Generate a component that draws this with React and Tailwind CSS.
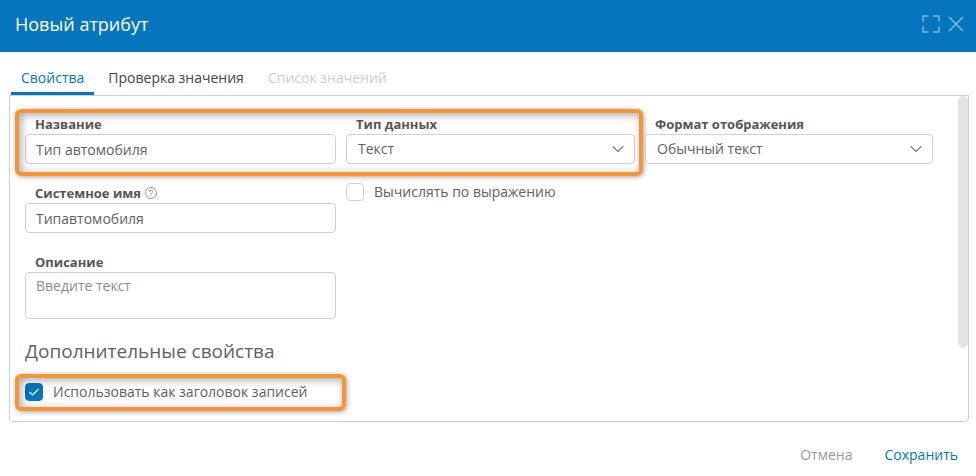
import React, { useState } from "react";

const tabs = [
  { id: "props", title: "Свойства" },
  { id: "check", title: "Проверка значения" },
  { id: "values", title: "Список значений", disabled: true },
];

const fieldClass =
  "w-full border border-[#cfcfcf] rounded bg-white text-[#606060] outline-none focus:border-[#0575bd]";

const Label = ({ htmlFor, children }) => (
  <label
    htmlFor={htmlFor}
    className="flex items-center gap-1 h-5 pl-2.5 text-[13px] leading-5 font-bold text-[#555]"
  >
    {children}
  </label>
);

const Select = ({ id, options }) => (
  <div className="relative">
    <select
      id={id}
      className={`${fieldClass} block appearance-none h-[30px] pl-[11px] pr-8`}
    >
      {options.map((option) => (
        <option key={option}>{option}</option>
      ))}
    </select>
    <svg
      viewBox="0 0 12 8"
      className="absolute right-[11px] top-[11px] w-3 h-2 pointer-events-none"
      fill="none"
      stroke="#5b7186"
      strokeWidth="1.1"
    >
      <path d="M0.7 1.3 6 6.5 11.3 1.3" />
    </svg>
  </div>
);

const Checkbox = ({ id, label, checked, onChange }) => (
  <div className="flex items-center gap-2.5">
    <span className="relative w-[18px] h-[18px]">
      <input
        id={id}
        type="checkbox"
        checked={checked}
        onChange={(e) => onChange(e.target.checked)}
        className="peer block appearance-none w-[18px] h-[18px] rounded border border-[#cfcfcf] bg-white checked:bg-[#0575bd] checked:border-[#0575bd]"
      />
      <svg
        viewBox="0 0 18 18"
        className="absolute inset-0 hidden peer-checked:block pointer-events-none"
        fill="none"
        stroke="#fff"
        strokeWidth="1.1"
      >
        <path d="M4.5 9 7.6 12 13.5 6" />
      </svg>
    </span>
    <label htmlFor={id} className="leading-[18px] text-[#606060]">
      {label}
    </label>
  </div>
);

// orange frame around the important fields
const Highlight = ({ className }) => (
  <div
    className={`absolute rounded-md border-4 border-[#f79433] pointer-events-none shadow-[1px_1px_5px_rgba(0,0,0,0.35),inset_2px_2px_8px_rgba(0,0,0,0.35)] ${className}`}
  />
);

const App = () => {
  const [activeTab, setActiveTab] = useState("props");
  const [name, setName] = useState("Тип автомобиля");
  const [systemName, setSystemName] = useState("Типавтомобиля");
  const [calculate, setCalculate] = useState(false);
  const [asTitle, setAsTitle] = useState(true);

  return (
    <div className="min-h-screen flex flex-col bg-white text-sm text-[#444] font-['Open_Sans','Noto_Sans',sans-serif]">
      <header className="flex items-center justify-between h-[52px] pl-[15px] pr-3 pb-1 bg-[#0575bd] text-white">
        <h1 className="text-lg leading-6">Новый атрибут</h1>
        <div className="flex items-center gap-2">
          <button type="button" aria-label="Развернуть">
            <svg viewBox="0 0 18 18" className="w-[18px] h-[18px]" fill="none" stroke="#82b9de" strokeWidth="1.4">
              <path d="M1 6.5V1h5.5M11 1h6v5.5M17 11.5V17h-6M6.5 17H1v-5.5" />
            </svg>
          </button>
          <button type="button" aria-label="Закрыть">
            <svg viewBox="0 0 16 16" className="w-4 h-4" fill="none" stroke="#82b9de" strokeWidth="1.5">
              <path d="M1 1 15 15M15 1 1 15" />
            </svg>
          </button>
        </div>
      </header>

      <nav className="flex gap-1 h-[43px] px-[11px]">
        {tabs.map((tab) => (
          <button
            key={tab.id}
            type="button"
            disabled={tab.disabled}
            onClick={() => setActiveTab(tab.id)}
            className={`px-2.5 pt-3 border-b-3 ${
              activeTab === tab.id
                ? "border-[#0575bd] text-[#0575bd]"
                : "border-transparent text-[#444] disabled:text-[#ccc]"
            }`}
          >
            {tab.title}
          </button>
        ))}
      </nav>

      <main className="relative flex-1 ml-[9px] mr-[7px] pt-[18px] pb-5 pl-[15px] pr-[35px] border border-[#cfcfcf] rounded-b">
        <div className="grid grid-cols-[311fr_289fr_288fr] gap-x-2.5 gap-y-[19px]">
          <div className="relative col-span-2 grid grid-cols-[311fr_289fr] gap-x-2.5">
            <div>
              <Label htmlFor="name">Название</Label>
              <input
                id="name"
                type="text"
                value={name}
                onChange={(e) => setName(e.target.value)}
                className={`${fieldClass} block h-[30px] px-2.5`}
              />
            </div>
            <div>
              <Label htmlFor="type">Тип данных</Label>
              <Select id="type" options={["Текст"]} />
            </div>
            <Highlight className="-left-2.5 -right-2 -top-[5px] -bottom-3" />
          </div>
          <div>
            <Label htmlFor="format">Формат отображения</Label>
            <Select id="format" options={["Обычный текст"]} />
          </div>

          <div>
            <Label htmlFor="system-name">
              Системное имя
              <svg viewBox="0 0 12 12" className="w-3 h-3" fill="none" stroke="#8a8a8a" strokeWidth="0.9">
                <circle cx="6" cy="6" r="5.5" />
                <path d="M4.4 4.8a1.6 1.6 0 1 1 2.4 1.3c-.6.4-.8.6-.8 1.2M6 8.2v1" />
              </svg>
            </Label>
            <input
              id="system-name"
              type="text"
              value={systemName}
              onChange={(e) => setSystemName(e.target.value)}
              className={`${fieldClass} block h-[30px] px-2.5`}
            />
          </div>
          <div className="col-span-2">
            <Checkbox
              id="calculate"
              label="Вычислять по выражению"
              checked={calculate}
              onChange={setCalculate}
            />
          </div>

          <div>
            <Label htmlFor="description">Описание</Label>
            <textarea
              id="description"
              placeholder="Введите текст"
              className={`${fieldClass} block h-[47px] px-2.5 py-[3px] leading-5 resize-none placeholder:text-[#8c8c8c]`}
            />
          </div>
        </div>

        <h2 className="my-[18px] text-[19px] leading-7 text-[#606060]">
          Дополнительные свойства
        </h2>
        <div className="grid grid-cols-[311fr_289fr_288fr] gap-x-2.5">
          <div className="relative">
            <Checkbox
              id="as-title"
              label="Использовать как заголовок записей"
              checked={asTitle}
              onChange={setAsTitle}
            />
            <Highlight className="-inset-x-2.5 -top-[9px] -bottom-2.5" />
          </div>
        </div>

        {/* scrollbar thumb */}
        <div className="absolute right-0 top-0 w-2.5 h-[252px] rounded-full bg-[#e4e4e4]" />
      </main>

      <footer className="flex items-center justify-end gap-8 h-[54px] px-[18px] pt-3">
        <button type="button" className="text-[#999]">
          Отмена
        </button>
        <button type="button" className="text-[#0575bd]">
          Сохранить
        </button>
      </footer>
    </div>
  );
};

export default App;
